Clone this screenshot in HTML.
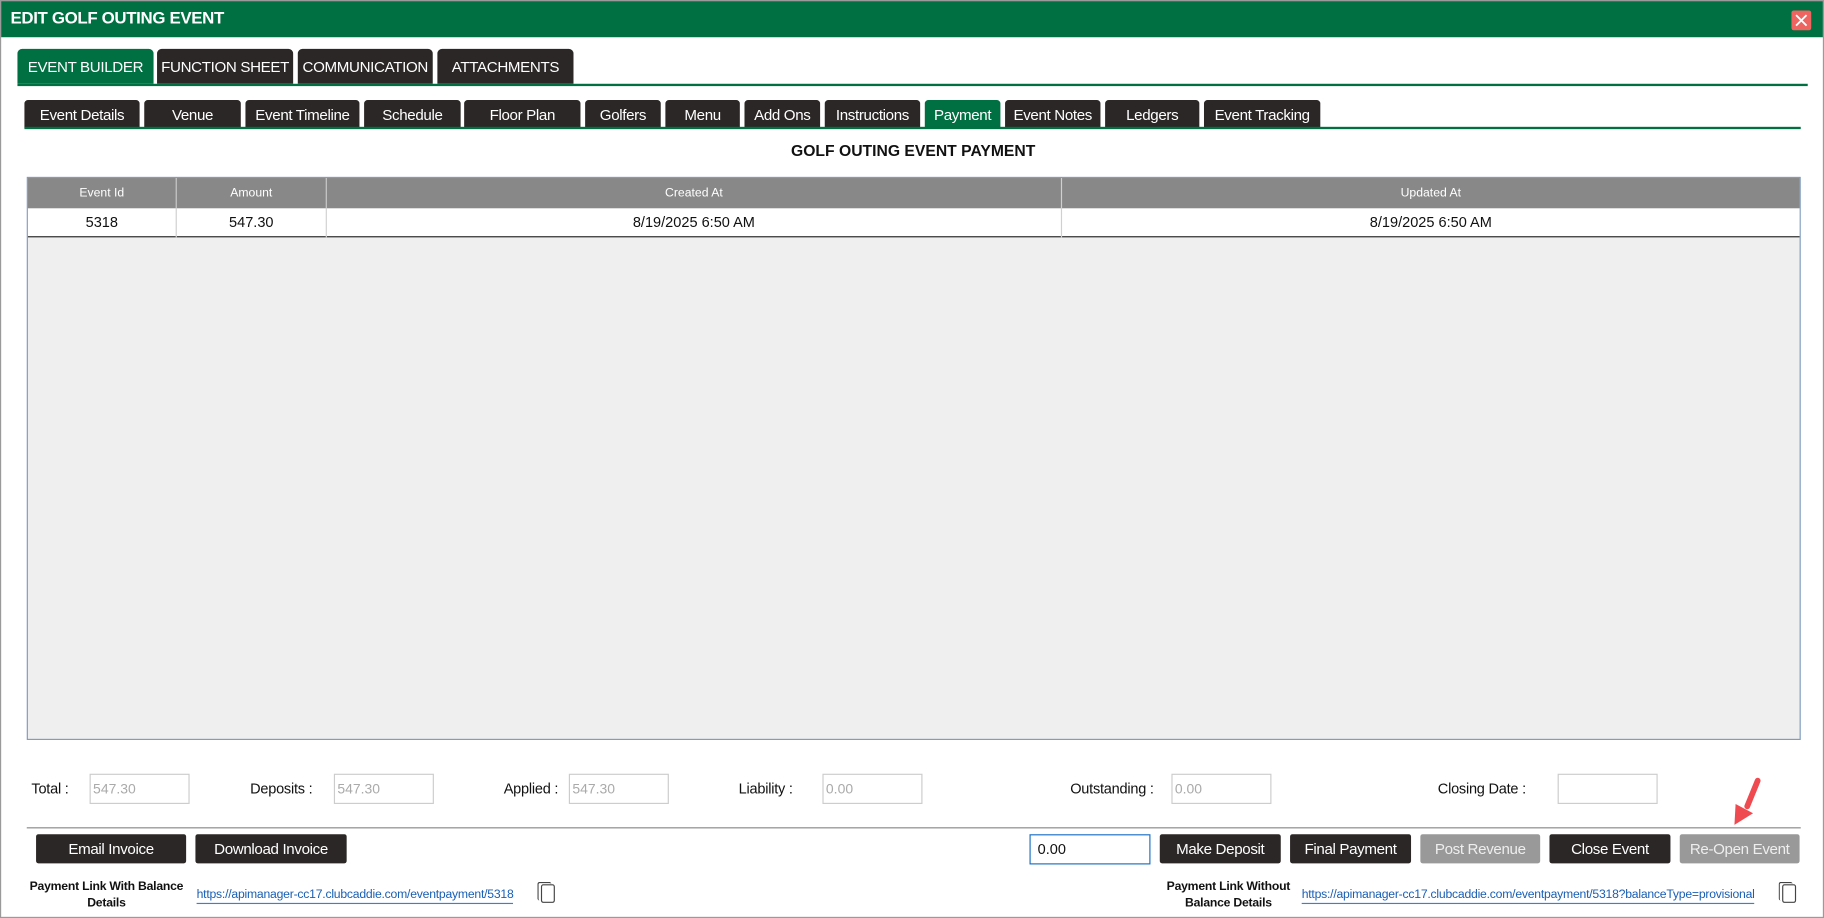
<!DOCTYPE html>
<html><head><meta charset="utf-8"><style>
*{box-sizing:border-box;margin:0;padding:0}
html,body{width:1824px;height:918px;overflow:hidden;background:#fff}
#w{position:absolute;left:0;top:0;width:1568px;height:789px;transform:scale(1.16327,1.16350);transform-origin:0 0;font-family:"Liberation Sans",sans-serif;color:#111;border:1px solid #9a9a9a;border-top:1px solid #9a9a9a}
.a{position:absolute}
.hdr{left:0;top:0;width:1566px;height:31px;background:#006f41;color:#fff;font-weight:bold;font-size:14.5px;line-height:31px;padding-left:8px;letter-spacing:-0.3px}
.x{left:1539px;top:8px;width:17px;height:17px;background:#ee6461;border-radius:2px}
.mt{top:41px;height:30px;background:#2b2726;color:#fff;font-size:13px;line-height:31px;text-align:center;border-radius:4px 4px 0 0;letter-spacing:-0.3px}
.st{top:85px;height:24px;background:#2b2726;color:#fff;font-size:13px;line-height:25px;text-align:center;border-radius:3px 3px 0 0;letter-spacing:-0.3px}
.g{background:#006f41}
.th{top:152px;height:26px;background:#888;color:#fff;font-size:10.5px;line-height:26px;text-align:center;border-right:1px solid #d0d0d0}
.td{top:178px;height:25px;font-size:12.5px;line-height:25px;text-align:center;border-right:1px solid #d0d0d0}
.lb{font-size:12.5px;top:670px;letter-spacing:-0.2px}
.in{top:664px;height:26px;width:86px;border:1px solid #ccc;font-size:12px;color:#aaa;line-height:24px;padding-left:2px}
.bt{top:716px;height:25px;background:#2b2726;color:#fff;font-size:13px;line-height:25px;text-align:center;border-radius:2px;letter-spacing:-0.3px}
.gr{background:#999;color:#eee}
.lk{font-size:10.5px;color:#1a5fb4;border-bottom:1px solid #3a7fd0;top:761px;line-height:14px;letter-spacing:-0.2px}
.pl{font-size:10.5px;font-weight:bold;text-align:center;line-height:14px;top:754px;letter-spacing:-0.2px}
.cp{top:759px;width:12px;height:16px;border:1px solid #444;border-radius:2px;background:#fff}
</style></head><body><div id="w">
<div class="a hdr">EDIT GOLF OUTING EVENT</div>
<div class="a x"><svg width="17" height="17"><path d="M4 4L13 13M13 4L4 13" stroke="#fff" stroke-width="1.6"/></svg></div>

<div class="a mt g" style="left:14px;width:117px">EVENT BUILDER</div>
<div class="a mt" style="left:134px;width:117px">FUNCTION SHEET</div>
<div class="a mt" style="left:255px;width:116px">COMMUNICATION</div>
<div class="a mt" style="left:375px;width:117px">ATTACHMENTS</div>
<div class="a g" style="left:14px;top:71px;width:1539px;height:2px"></div>

<div class="a st" style="left:20px;width:99px">Event Details</div>
<div class="a st" style="left:123px;width:83px">Venue</div>
<div class="a st" style="left:210px;width:98px">Event Timeline</div>
<div class="a st" style="left:312px;width:83px">Schedule</div>
<div class="a st" style="left:398px;width:100px">Floor Plan</div>
<div class="a st" style="left:502px;width:65px">Golfers</div>
<div class="a st" style="left:571px;width:64px">Menu</div>
<div class="a st" style="left:639px;width:65px">Add Ons</div>
<div class="a st" style="left:708px;width:82px">Instructions</div>
<div class="a st g" style="left:794px;width:65px">Payment</div>
<div class="a st" style="left:863px;width:82px">Event Notes</div>
<div class="a st" style="left:949px;width:81px">Ledgers</div>
<div class="a st" style="left:1034px;width:100px">Event Tracking</div>
<div class="a g" style="left:20px;top:108px;width:1527px;height:2px"></div>

<div class="a" style="left:0;width:1568px;top:120px;text-align:center;font-weight:bold;font-size:13.5px;line-height:18px">GOLF OUTING EVENT PAYMENT</div>

<div class="a" style="left:22px;top:151px;width:1525px;height:484px;background:#efefef;border:1px solid #7d9dbf"></div>
<div class="a" style="left:23px;top:178px;width:1523px;height:25px;background:#fff;border-bottom:1px solid #222"></div>
<div class="a th" style="left:23px;width:128px">Event Id</div>
<div class="a th" style="left:151px;width:129px">Amount</div>
<div class="a th" style="left:280px;width:632px">Created At</div>
<div class="a th" style="left:912px;width:634px;border-right:0">Updated At</div>
<div class="a td" style="left:23px;width:128px">5318</div>
<div class="a td" style="left:151px;width:129px">547.30</div>
<div class="a td" style="left:280px;width:632px">8/19/2025 6:50 AM</div>
<div class="a td" style="left:912px;width:634px;border-right:0">8/19/2025 6:50 AM</div>

<div class="a lb" style="left:26px">Total :</div><div class="a in" style="left:76px">547.30</div>
<div class="a lb" style="left:214px">Deposits :</div><div class="a in" style="left:286px">547.30</div>
<div class="a lb" style="left:432px">Applied :</div><div class="a in" style="left:488px">547.30</div>
<div class="a lb" style="left:634px">Liability :</div><div class="a in" style="left:706px">0.00</div>
<div class="a lb" style="left:919px">Outstanding :</div><div class="a in" style="left:1006px">0.00</div>
<div class="a lb" style="left:1235px">Closing Date :</div><div class="a in" style="left:1338px"></div>

<div class="a" style="left:22px;top:710px;width:1525px;height:1px;background:#888"></div>

<div class="a bt" style="left:30px;width:129px">Email Invoice</div>
<div class="a bt" style="left:167px;width:130px">Download Invoice</div>
<div class="a" style="left:884px;top:716px;width:104px;height:26px;border:1px solid #1a6fc4;font-size:12.5px;line-height:24px;padding-left:6px">0.00</div>
<div class="a bt" style="left:996px;width:104px">Make Deposit</div>
<div class="a bt" style="left:1108px;width:104px">Final Payment</div>
<div class="a bt gr" style="left:1220px;width:103px">Post Revenue</div>
<div class="a bt" style="left:1331px;width:104px">Close Event</div>
<div class="a bt gr" style="left:1443px;width:103px">Re-Open Event</div>

<svg class="a" style="left:1484px;top:666px" width="32" height="46"><path d="M26 4 L17 26" stroke="#ef4a50" stroke-width="5" fill="none" stroke-linecap="round"/><path d="M7 24 L6 42 L22 32 Z" fill="#ef4a50"/></svg>

<div class="a pl" style="left:18px;width:145px">Payment Link With Balance<br>Details</div>
<div class="a lk" style="left:168px">https://apimanager-cc17.clubcaddie.com/eventpayment/5318</div>
<div class="a cp" style="left:464px"></div><div class="a cp" style="left:461px;top:757px;width:12px;border-color:#444;background:transparent;border-right:0;border-bottom:0"></div>
<div class="a pl" style="left:992px;width:126px">Payment Link Without<br>Balance Details</div>
<div class="a lk" style="left:1118px">https://apimanager-cc17.clubcaddie.com/eventpayment/5318?balanceType=provisional</div>
<div class="a cp" style="left:1531px"></div><div class="a cp" style="left:1528px;top:757px;background:transparent;border-right:0;border-bottom:0"></div>
</div></body></html>
